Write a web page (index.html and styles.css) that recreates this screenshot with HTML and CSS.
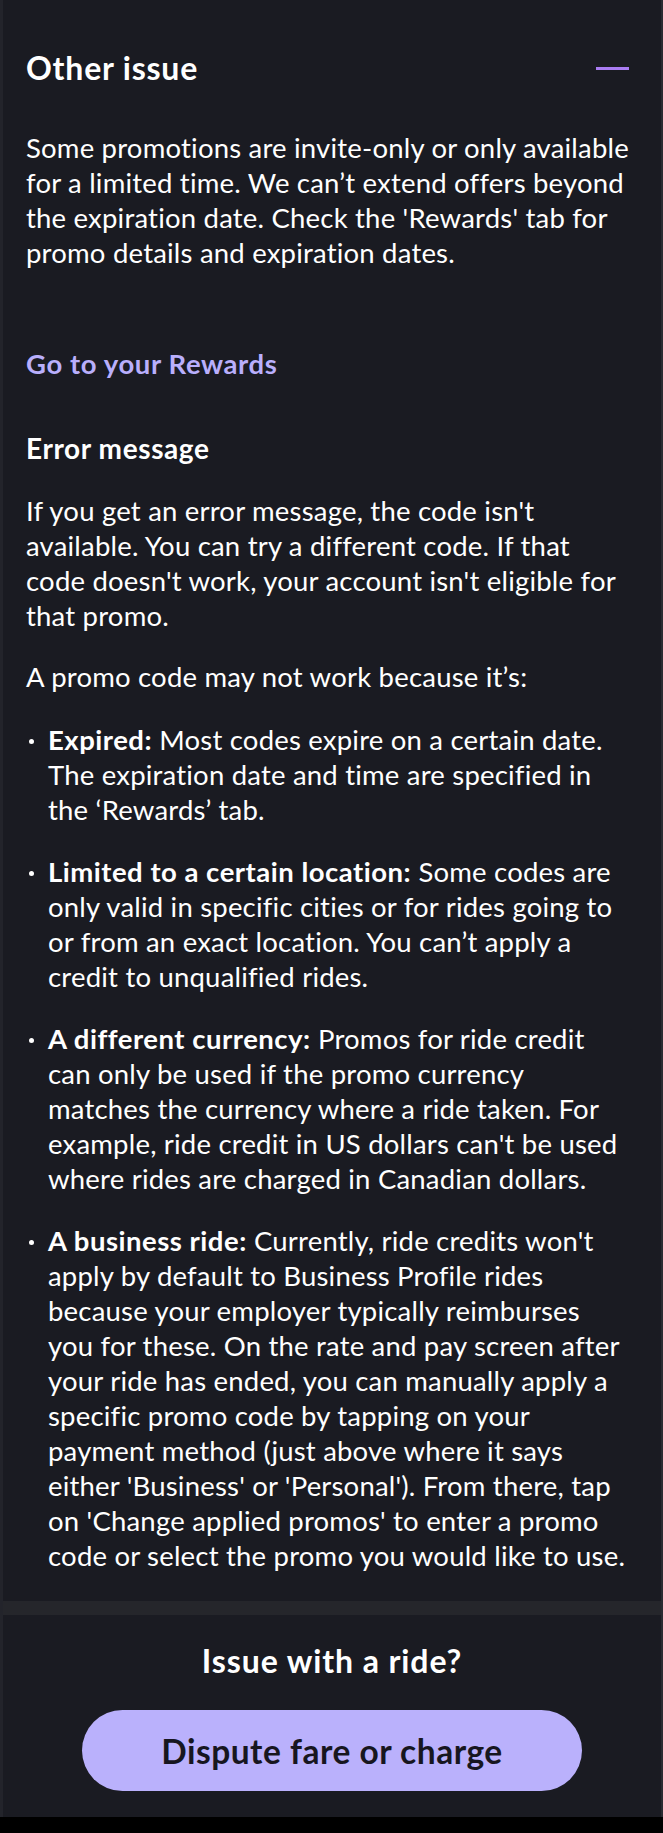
FILE: index.html
```html
<!DOCTYPE html>
<html lang="en">
<head>
<meta charset="utf-8">
<title>Other issue</title>
<link rel="stylesheet" href="styles.css">
</head>
<body>
<main class="screen">
  <section class="faq">
    <div class="faq-head">
      <h2 class="faq-title">Other issue</h2>
      <span class="collapse-dash" aria-hidden="true"></span>
    </div>
    <p class="body-text intro">Some promotions are invite-only or only available for a limited time. We can’t extend offers beyond the expiration date. Check the 'Rewards' tab for promo details and expiration dates.</p>
    <a class="rewards-link" href="#">Go to your Rewards</a>
    <h3 class="sub-title">Error message</h3>
    <p class="body-text p-error">If you get an error message, the code isn't available. You can try a different code. If that code doesn't work, your account isn't eligible for that promo.</p>
    <p class="body-text p-lead">A promo code may not work because it’s:</p>
    <ul class="reasons">
      <li><strong>Expired:</strong> Most codes expire on a certain date. The expiration date and time are specified in the ‘Rewards’ tab.</li>
      <li><strong>Limited to a certain location:</strong> Some codes are only valid in specific cities or for rides going to or from an exact location. You can’t apply a credit to unqualified rides.</li>
      <li><strong>A different currency:</strong> Promos for ride credit can only be used if the promo currency matches the currency where a ride taken. For example, ride credit in US dollars can't be used where rides are charged in Canadian dollars.</li>
      <li><strong>A business ride:</strong> Currently, ride credits won't apply by default to Business Profile rides because your employer typically reimburses you for these. On the rate and pay screen after your ride has ended, you can manually apply a specific promo code by tapping on your payment method (just above where it says either 'Business' or 'Personal'). From there, tap on 'Change applied promos' to enter a promo code or select the promo you would like to use.</li>
    </ul>
  </section>
  <div class="divider"></div>
  <section class="ride-issue">
    <h3 class="ride-title">Issue with a ride?</h3>
    <button class="dispute-btn" type="button">Dispute fare or charge</button>
  </section>
</main>
</body>
</html>
```

FILE: styles.css
```css
* { box-sizing: border-box; }

html, body {
  margin: 0;
  padding: 0;
  background: #000;
}

body {
  font-family: Lato, "Liberation Sans", sans-serif;
  color: #ffffff;
  -webkit-font-smoothing: antialiased;
}

.screen {
  width: 663px;
  background: #1a1b22;
  border-left: 3px solid #23242b;
  border-right: 2px solid #2a2b31;
  padding-bottom: 26px;
}

.faq {
  padding: 50px 31px 28px 23px;
  display: flex;
  flex-direction: column;
}

.faq-head {
  display: flex;
  align-items: center;
  justify-content: space-between;
  height: 36px;
}

.faq-title {
  margin: 0;
  font-size: 32px;
  line-height: 36px;
  font-weight: 700;
  letter-spacing: 0.8px;
}

.collapse-dash {
  width: 33px;
  height: 3px;
  background: #a97cf2;
  margin-right: 1px;
}

.body-text {
  margin: 0;
  font-size: 27.5px;
  line-height: 35px;
  font-weight: 400;
  letter-spacing: 0.2px;
}

.intro { margin-top: 44px; }

.rewards-link {
  margin-top: 76px;
  font-size: 27.5px;
  line-height: 35px;
  font-weight: 700;
  letter-spacing: 0.6px;
  color: #b9affc;
  text-decoration: none;
  align-self: flex-start;
}

.sub-title {
  margin: 50px 0 0;
  font-size: 28px;
  line-height: 35px;
  font-weight: 700;
  letter-spacing: 0.6px;
}

.p-error { margin-top: 27px; }
.p-lead { margin-top: 26px; }

.reasons {
  list-style: none;
  margin: 28px 0 0;
  padding: 0;
  display: flex;
  flex-direction: column;
  gap: 27px;
}

.reasons li {
  position: relative;
  padding-left: 22px;
  font-size: 27.5px;
  line-height: 35px;
  letter-spacing: 0.2px;
}

.reasons li::before {
  content: "";
  position: absolute;
  left: 3px;
  top: 17px;
  width: 5px;
  height: 5px;
  border-radius: 50%;
  background: #ffffff;
}

.reasons strong {
  font-weight: 700;
  letter-spacing: 0.5px;
}

.divider {
  height: 14px;
  background: #25262b;
}

.ride-issue {
  display: flex;
  flex-direction: column;
  align-items: center;
  padding-top: 28px;
}

.ride-title {
  margin: 0;
  font-size: 32px;
  line-height: 36px;
  font-weight: 700;
  letter-spacing: 0.9px;
}

.dispute-btn {
  margin-top: 31px;
  width: 500px;
  height: 81px;
  border: none;
  border-radius: 41px;
  background: #bab1fc;
  color: #17161f;
  font-family: inherit;
  font-size: 33.5px;
  font-weight: 700;
  letter-spacing: 0.5px;
  cursor: pointer;
}
```
